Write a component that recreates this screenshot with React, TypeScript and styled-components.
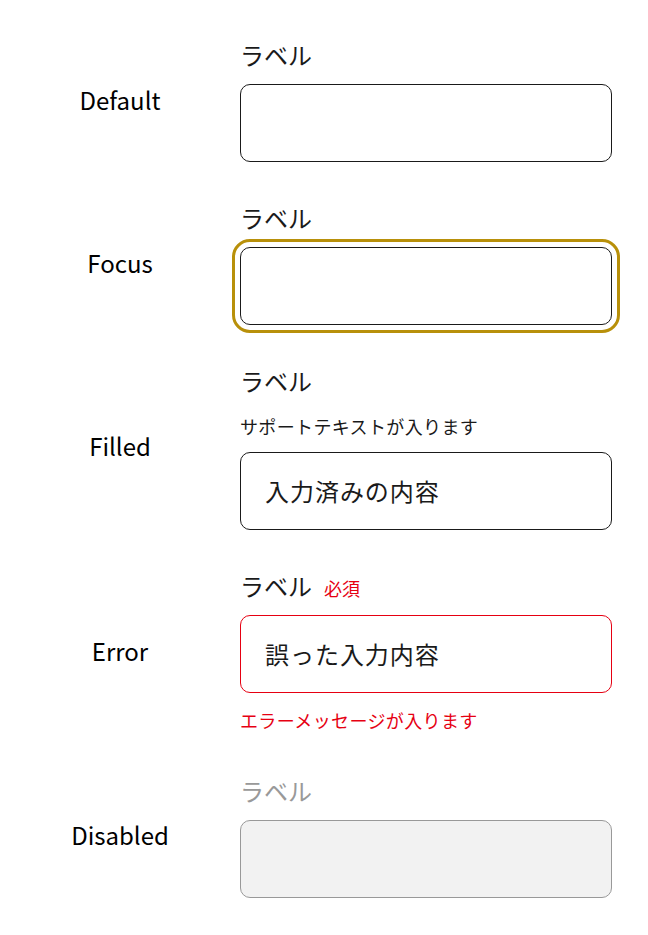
import React from "react";
import styled, { createGlobalStyle, css } from "styled-components";

const Global = createGlobalStyle`
  html, body { margin: 0; padding: 0; background: #fff; }
  body { font-family: "Noto Sans CJK JP", "Noto Sans", sans-serif; color: #1a1a1a; }
  * { box-sizing: border-box; }
`;

const Page = styled.div`
  display: flex;
  flex-direction: column;
  gap: 38px;
  padding: 37px 36px 30px 0;
`;

const Row = styled.div`
  display: grid;
  grid-template-columns: 240px 372px;
  align-items: center;
`;

const StateName = styled.div`
  text-align: center;
  font-size: 24px;
  line-height: 1.5;
  color: #000;
`;

const Field = styled.div`
  display: flex;
  flex-direction: column;
  gap: 11px;
`;

const LabelLine = styled.div`
  display: flex;
  align-items: baseline;
  gap: 12px;
`;

const Label = styled.label<{ $disabled?: boolean }>`
  font-size: 24px;
  line-height: 1.5;
  color: ${(p) => (p.$disabled ? "#999" : "#1a1a1a")};
`;

const Required = styled.span`
  font-size: 18px;
  line-height: 1.5;
  color: #e60012;
`;

const Support = styled.div<{ $error?: boolean }>`
  margin-top: 2px;
  font-size: 18px;
  line-height: 1.6;
  letter-spacing: 0.02em;
  color: ${(p) => (p.$error ? "#e60012" : "#1a1a1a")};
`;

type Variant = "default" | "focus" | "error" | "disabled";

const Input = styled.input<{ $variant: Variant }>`
  display: block;
  width: 372px;
  height: 78px;
  padding: 0 24px;
  border-radius: 10px;
  border: 1px solid #1a1a1a;
  background: #fff;
  font-family: "Noto Sans CJK JP", "Noto Sans", sans-serif;
  font-size: 24px;
  letter-spacing: 0.04em;
  color: #1a1a1a;
  outline: none;
  ${(p) =>
    p.$variant === "focus" &&
    css`
      outline: 3px solid #b8900a;
      outline-offset: 5px;
    `}
  ${(p) =>
    p.$variant === "error" &&
    css`
      border-color: #e60012;
    `}
  ${(p) =>
    p.$variant === "disabled" &&
    css`
      border-color: #999;
      background: #f2f2f2;
    `}
`;

export default function App() {
  return (
    <>
      <Global />
      <Page>
        <Row>
          <StateName>Default</StateName>
          <Field>
            <Label>ラベル</Label>
            <Input $variant="default" readOnly />
          </Field>
        </Row>
        <Row>
          <StateName>Focus</StateName>
          <Field>
            <Label>ラベル</Label>
            <Input $variant="focus" readOnly />
          </Field>
        </Row>
        <Row>
          <StateName>Filled</StateName>
          <Field>
            <Label>ラベル</Label>
            <Support>サポートテキストが入ります</Support>
            <Input $variant="default" readOnly defaultValue="入力済みの内容" />
          </Field>
        </Row>
        <Row>
          <StateName>Error</StateName>
          <Field>
            <LabelLine>
              <Label>ラベル</Label>
              <Required>必須</Required>
            </LabelLine>
            <Input $variant="error" readOnly defaultValue="誤った入力内容" />
            <Support $error>エラーメッセージが入ります</Support>
          </Field>
        </Row>
        <Row>
          <StateName>Disabled</StateName>
          <Field>
            <Label $disabled>ラベル</Label>
            <Input $variant="disabled" disabled />
          </Field>
        </Row>
      </Page>
    </>
  );
}
